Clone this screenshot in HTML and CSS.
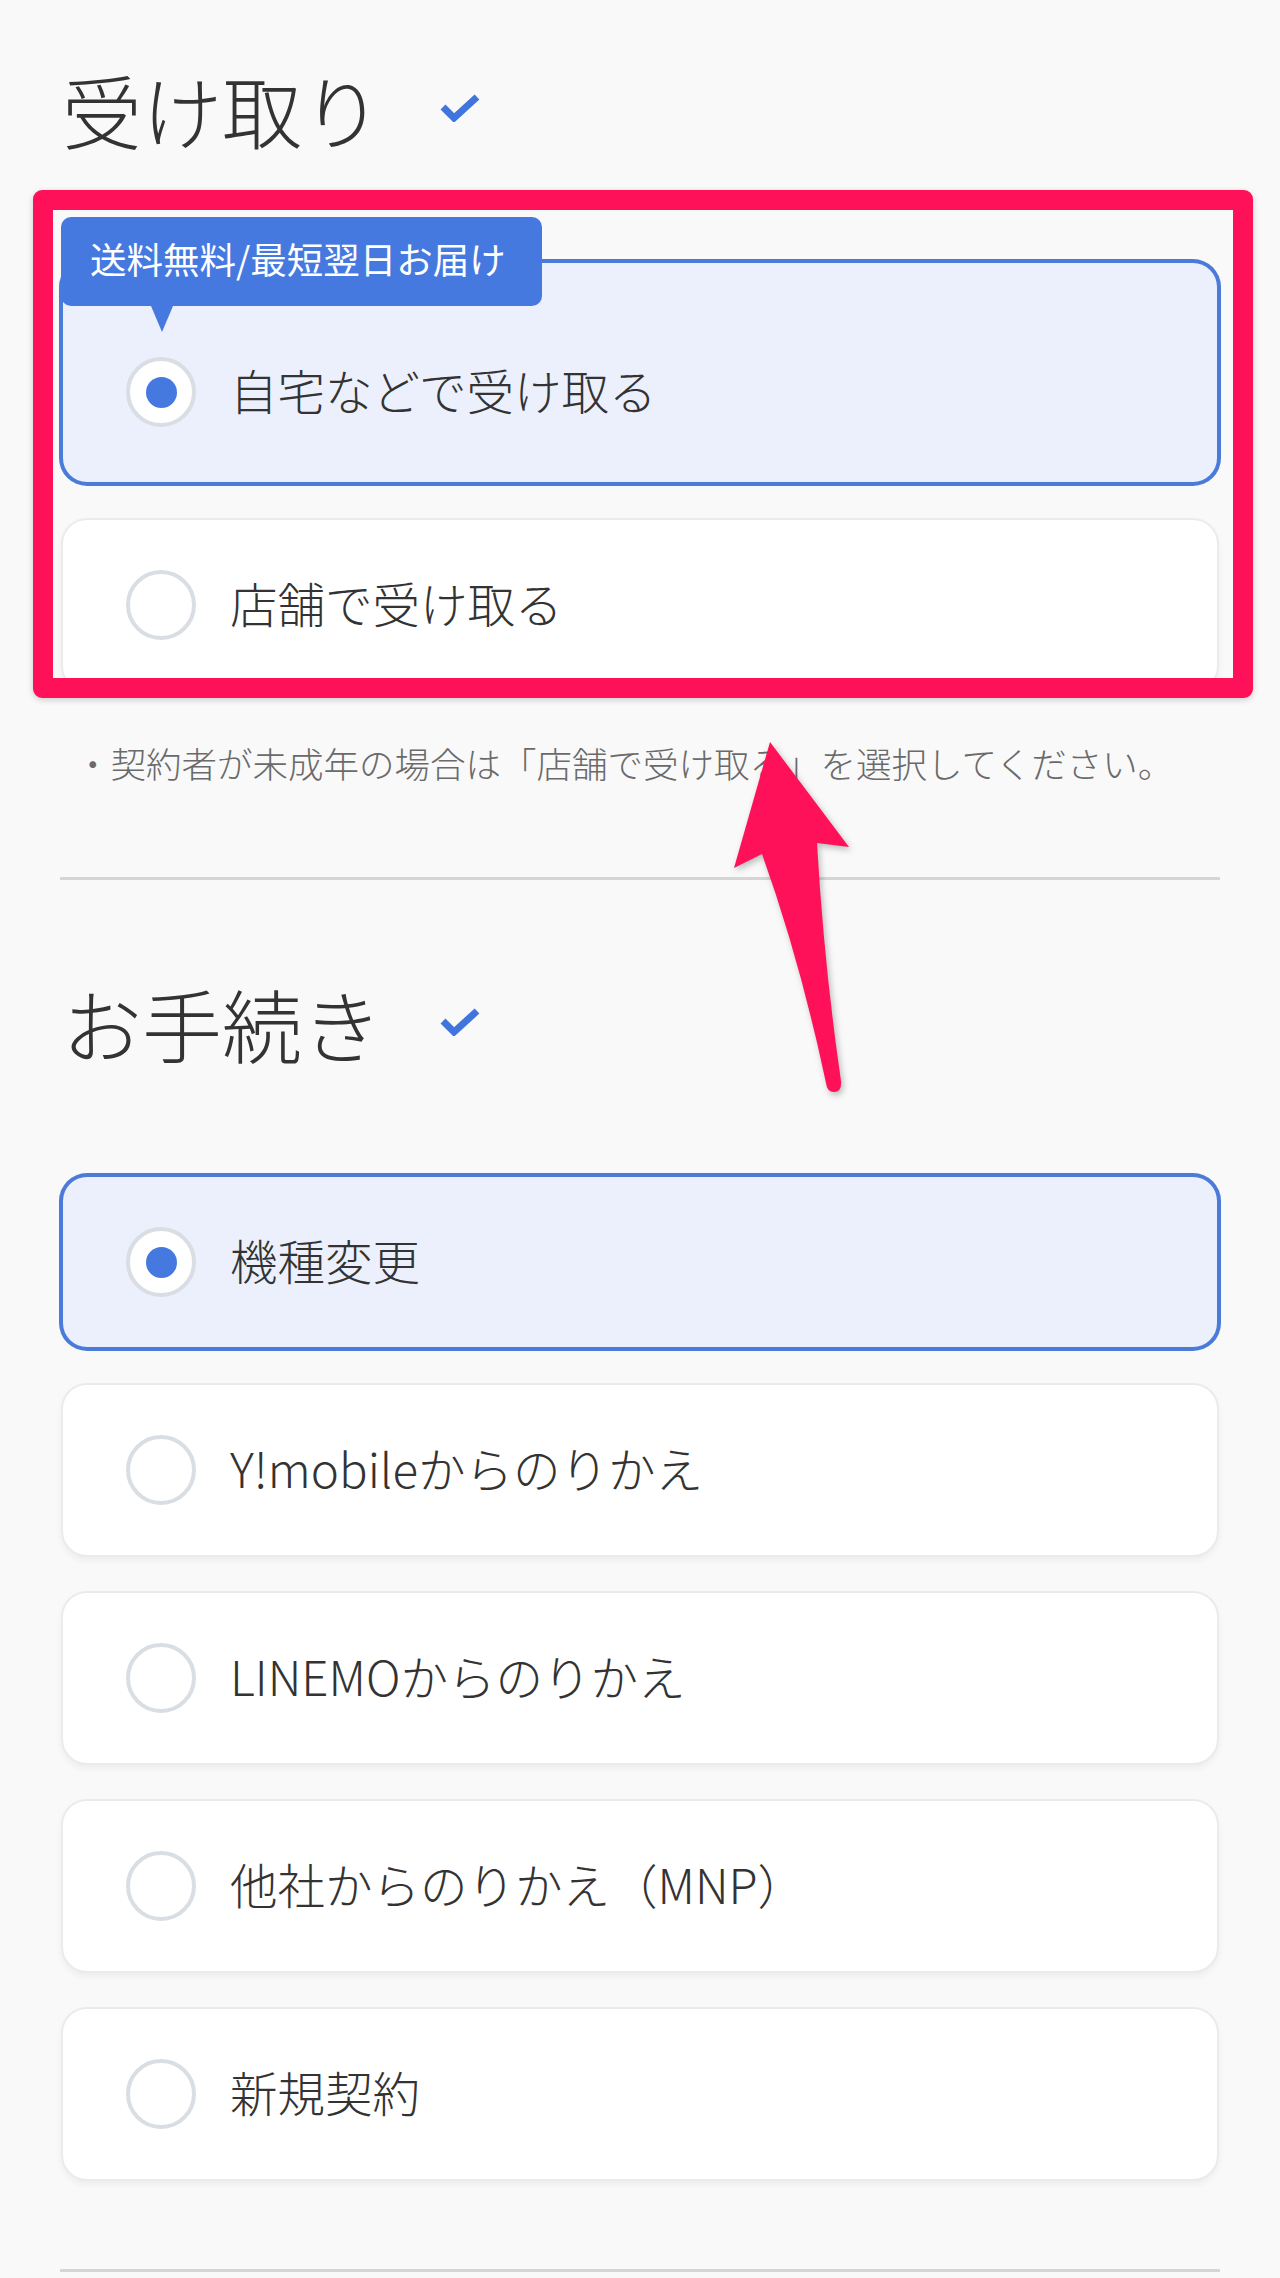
FILE: index.html
```html
<!DOCTYPE html>
<html lang="ja">
<head>
<meta charset="utf-8">
<title>受け取り・お手続き</title>
<link rel="stylesheet" href="styles.css">
</head>
<body>
<main class="page">
  <section class="section">
    <h2 class="heading">
      <span class="heading-text">受け取り</span>
      <svg class="check" viewBox="0 0 40 28" aria-hidden="true"><path d="M3 13 L14 24 L37 3" /></svg>
    </h2>
    <div class="options">
      <div class="option option-selected option-badged">
        <span class="badge">送料無料/最短翌日お届け</span>
        <span class="radio radio-on"><span class="dot"></span></span>
        <span class="label">自宅などで受け取る</span>
      </div>
      <div class="option">
        <span class="radio"></span>
        <span class="label">店舗で受け取る</span>
      </div>
    </div>
    <p class="note">・契約者が未成年の場合は「店舗で受け取る」を選択してください。</p>
  </section>

  <hr class="divider divider-first">

  <section class="section">
    <h2 class="heading heading-second">
      <span class="heading-text">お手続き</span>
      <svg class="check" viewBox="0 0 40 28" aria-hidden="true"><path d="M3 13 L14 24 L37 3" /></svg>
    </h2>
    <div class="options">
      <div class="option option-selected">
        <span class="radio radio-on"><span class="dot"></span></span>
        <span class="label">機種変更</span>
      </div>
      <div class="option">
        <span class="radio"></span>
        <span class="label">Y!mobileからのりかえ</span>
      </div>
      <div class="option">
        <span class="radio"></span>
        <span class="label">LINEMOからのりかえ</span>
      </div>
      <div class="option">
        <span class="radio"></span>
        <span class="label">他社からのりかえ（MNP）</span>
      </div>
      <div class="option">
        <span class="radio"></span>
        <span class="label">新規契約</span>
      </div>
    </div>
  </section>

  <hr class="divider divider-last">
</main>

<div class="annot-box" aria-hidden="true"></div>
<svg class="annot-arrow" viewBox="0 0 1280 2278" aria-hidden="true">
  <path d="M770 742 L849 847 L817 843 Q 824 965 841 1081 Q 842 1092 834 1092 Q 827 1092 826 1083 Q 800 960 762 854 L734 868 Z" />
</svg>
</body>
</html>
```

FILE: styles.css
```css
* {
  box-sizing: border-box;
}

html, body {
  margin: 0;
  padding: 0;
  background: #f9f9f9;
}

body {
  width: 1280px;
  min-height: 2278px;
  position: relative;
  font-family: "Noto Sans CJK JP", "Noto Sans", sans-serif;
  font-weight: 300;
  color: #333333;
}

.page {
  padding: 60px 60px 0 60px;
}

.section {
  display: block;
}

.heading {
  display: flex;
  align-items: center;
  gap: 58px;
  margin: 0;
  height: 96px;
  font-size: 80px;
  line-height: 96px;
  font-weight: 300;
  color: #333333;
  padding-left: 2px;
}

.heading-second {
  margin-top: 94px;
}

.check {
  width: 40px;
  height: 28px;
  flex: none;
}

.check path {
  fill: none;
  stroke: #3f75dd;
  stroke-width: 7;
  stroke-linecap: butt;
  stroke-linejoin: miter;
}

.options {
  display: flex;
  flex-direction: column;
  gap: 38px;
  margin: 107px 3px 0 3px;
}

.option {
  position: relative;
  display: flex;
  align-items: center;
  height: 170px;
  padding-left: 63px;
  background: #ffffff;
  border-radius: 24px;
  box-shadow: 0 0 0 2px #ebebeb, 0 4px 8px rgba(0, 0, 0, 0.07);
}

.option-selected {
  background: #ebf0fc;
  box-shadow: 0 0 0 4px #4a7bd9;
}

.option-badged {
  height: 219px;
  padding-top: 39px;
}

.badge {
  position: absolute;
  top: -46px;
  left: -2px;
  height: 89px;
  padding: 0 36px 4px 29px;
  display: flex;
  align-items: center;
  background: #4679e0;
  color: #ffffff;
  font-size: 36.5px;
  font-weight: 400;
  line-height: 1;
  border-radius: 10px;
  white-space: nowrap;
}

.badge::after {
  content: "";
  position: absolute;
  top: 100%;
  left: 90px;
  border-left: 11px solid transparent;
  border-right: 11px solid transparent;
  border-top: 26px solid #4679e0;
}

.radio {
  flex: none;
  width: 70px;
  height: 70px;
  border: 4px solid #d9dde4;
  border-radius: 50%;
  background: #ffffff;
  display: flex;
  align-items: center;
  justify-content: center;
}

.dot {
  width: 31px;
  height: 31px;
  border-radius: 50%;
  background: #4679e0;
}

.label {
  margin-left: 34px;
  padding-bottom: 5px;
  font-size: 47.5px;
  line-height: 1.3;
  color: #333333;
  white-space: nowrap;
}

.note {
  margin: 48px 0 0 0;
  padding-left: 15px;
  font-size: 35.5px;
  line-height: 50px;
  color: #6a6a6a;
  white-space: nowrap;
}

.divider {
  border: none;
  height: 3px;
  background: #d5d5d5;
  margin: 0;
}

.divider-first {
  margin-top: 89px;
}

.divider-last {
  margin-top: 90px;
}

.annot-box {
  position: absolute;
  left: 33px;
  top: 190px;
  width: 1220px;
  height: 508px;
  border: 20px solid #fe1158;
  border-radius: 9px;
  box-shadow: 0 2px 6px rgba(0, 0, 0, 0.18);
  pointer-events: none;
}

.annot-arrow {
  position: absolute;
  left: 0;
  top: 0;
  width: 1280px;
  height: 2278px;
  pointer-events: none;
  filter: drop-shadow(2px 3px 3px rgba(0, 0, 0, 0.25));
}

.annot-arrow path {
  fill: #fe1158;
}
```
